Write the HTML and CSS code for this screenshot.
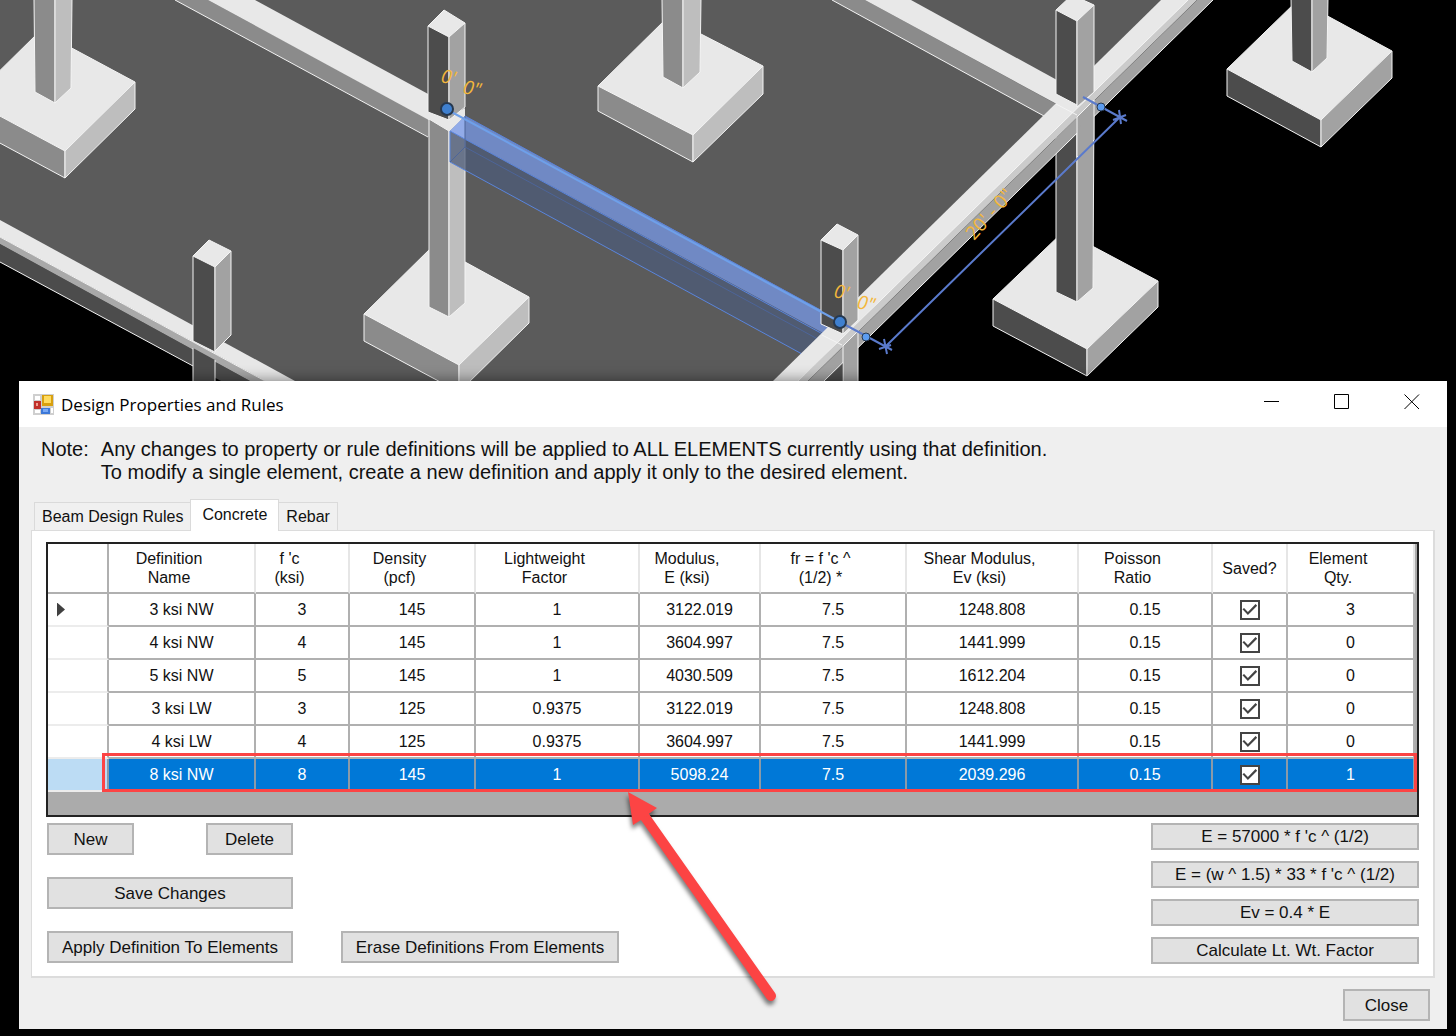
FILE: index.html
```
<!DOCTYPE html>
<html lang="en">
<head>
    <meta charset="UTF-8">
    <meta name="viewport" content="width=device-width, initial-scale=1.0">
    <title>Design Properties and Rules</title>
    <link rel="stylesheet" href="styles.css">
</head>
<body>
    <svg class="scene" viewBox="0 0 1456 381" role="img" aria-label="3D model view">
        <!-- slab -->
        <polygon class="slab" points="0,0 1188,0 798,381 280,381 0,230"/>

        <!-- footings and lower columns -->
        <g class="edges">
            <polygon class="top" points="-30,100 40,31 135,82 65,151"/>
            <polygon class="mid" points="-30,100 65,151 65,178 -30,127"/>
            <polygon class="light" points="65,151 135,82 135,109 65,178"/>
            <polygon class="mid" points="34,-2 55,-2 55,103 35,92"/>
            <polygon class="light" points="55,-2 72,-2 71,88 55,103"/>

            <polygon class="top" points="598,86 668,17 763,66 693,135"/>
            <polygon class="mid" points="598,86 693,135 693,162 598,111"/>
            <polygon class="light" points="693,135 763,66 763,94 693,162"/>
            <polygon class="mid" points="662,-2 683,-2 683,88 663,77"/>
            <polygon class="light" points="683,-2 701,-2 700,72 683,88"/>

            <polygon class="top" points="364,314 434,245 529,297 459,365"/>
            <polygon class="mid" points="364,314 459,365 459,392 364,341"/>
            <polygon class="light" points="459,365 529,297 529,323 459,392"/>
        </g>

        <!-- beam into the second column line -->
        <polygon class="mid" points="175,0 208,0 449,130 449,148"/>
        <polygon class="top" points="208,0 255,0 465,114 465,117 449,131"/>
        <path class="line" d="M175 0 428 137"/>

        <g class="edges">
            <polygon class="mid" points="429,119 449,131 449,317 429,307"/>
            <polygon class="light" points="449,131 465,117 465,303 449,317"/>
        </g>
        <polygon class="top" points="429,112 447,118 465,108 465,117 449,131 429,119"/>
        <g class="edges">
            <polygon class="top" points="428,26 444,10 465,23 449,37"/>
            <polygon class="dark" points="428,26 449,37 449,120 428,112"/>
            <polygon class="grey" points="449,37 465,23 465,107 449,120"/>
        </g>

        <!-- front left beam -->
        <polygon class="top" points="0,220 295,381 265,381 0,237"/>
        <polygon class="dark" points="0,244 250,381 221,381 0,262"/>
        <polygon class="strip" points="0,237 265,381 250,381 0,244"/>
        <path class="line" d="M0 237 265 381M0 262 193 366"/>
        <polygon fill="#000" points="0,264 193,367 193,381 0,381"/>
        <polygon class="dark" points="193,348 215,360 215,381 193,381"/>
        <path class="line" d="M193 348V381M215 360V381"/>
        <g class="edges">
            <polygon class="top" points="193,256 209,240 231,251 215,267"/>
            <polygon class="dark" points="193,256 215,267 215,352 193,341"/>
            <polygon class="grey" points="215,267 231,251 231,335 215,351"/>
        </g>

        <!-- back right beam -->
        <polygon class="mid" points="832,0 865,0 1056,104 1044,116"/>
        <polygon class="top" points="865,0 911,0 1077,91 1077,115"/>
        <path class="line" d="M832 0 1044 116"/>

        <!-- right hand footings -->
        <g class="edges">
            <polygon class="top" points="993,299 1064,231 1158,281 1087,349"/>
            <polygon class="dark" points="993,299 1087,349 1087,376 993,326"/>
            <polygon class="grey" points="1087,349 1158,281 1158,307 1087,376"/>
            <polygon class="dark" points="1056,120 1077,110 1077,302 1056,292"/>
            <polygon class="grey" points="1077,110 1094,96 1093,288 1077,302"/>

            <polygon class="top" points="1227,69 1298,0 1392,51 1321,120"/>
            <polygon class="dark" points="1227,69 1321,120 1321,147 1227,96"/>
            <polygon class="grey" points="1321,120 1392,51 1392,78 1321,147"/>
            <polygon class="dark" points="1291,-2 1312,-2 1312,72 1292,61"/>
            <polygon class="grey" points="1312,-2 1328,-2 1327,58 1312,72"/>
        </g>

        <!-- selected beam -->
        <polygon class="sel-side" points="450,131 835,339 802,354 450,162"/>
        <polygon class="sel-top" points="450,131 465,116 836,318 836,340"/>
        <polygon class="sel-end" points="450,131 465,116 465,139"/>
        <path class="sel-line" d="M450 131V162L802 354M450 131 830 338M465 116 822 311"/>
        <path class="sel-faint" d="M450 162 465 147V116M465 147 825 343"/>

        <!-- edge beam -->
        <polygon class="dark" points="842,363 842,381 822,381"/>
        <polygon class="top" points="1161,0 1190,0 798,381 773,381"/>
        <polygon class="ridge" points="1188,0 1197,0 808,381 798,381"/>
        <polygon class="grey" points="1197,0 1213,0 824,381 808,381"/>
        <path class="line" d="M1188 0 798 381M1213 0 824 381"/>
        <path class="line" d="M1056 104 1077 115M822 335 842 345"/>

        <g class="edges">
            <polygon class="top" points="1056,10 1072,-5 1094,5 1077,21"/>
            <polygon class="dark" points="1056,10 1077,21 1077,105 1056,94"/>
            <polygon class="grey" points="1077,21 1094,5 1094,92 1077,107"/>
            <polygon class="grey" points="1077,117 1094,100 1094,140 1077,157"/>

            <polygon class="top" points="821,240 837,224 858,235 843,250"/>
            <polygon class="dark" points="821,240 843,250 843,334 821,324"/>
            <polygon class="grey" points="843,250 858,235 858,320 843,334"/>
            <polygon class="grey" points="843,346 858,331 858,390 843,390"/>
        </g>
        <polygon class="grey" points="1078,128 1093,115 1093,170 1078,170"/>

        <!-- dimensions -->
        <path class="bright" d="M446 109 840 322"/>
        <path class="dim" d="M840 322 892 350M885 347 1120 117M1083 97 1127 121M884 339 887 354M879 349 891 345M1119 110 1121 124M1113 120 1126 115"/>
        <circle class="grip" cx="447" cy="109" r="6"/>
        <circle class="grip" cx="840" cy="322" r="6"/>
        <circle class="grip small" cx="866" cy="337" r="4"/>
        <circle class="grip small" cx="1101" cy="107" r="4"/>
        <g class="dim-text">
            <text transform="translate(440 82) rotate(12)">0'</text>
            <text transform="translate(462 93) rotate(12)">0"</text>
            <text transform="translate(833 297) rotate(12)">0'</text>
            <text transform="translate(856 308) rotate(12)">0"</text>
            <text class="upright" transform="translate(974 241) rotate(-48)">20' - 0"</text>
        </g>
    </svg>

    <main class="dialog">
        <header class="title-bar">
            <svg class="app-icon" viewBox="0 0 21 21" aria-hidden="true">
                <rect width="21" height="21" fill="#cfcfcf"/>
                <path fill="#fff" d="M2 2h5v4H2zM2 16h5v3H2zM18 14h2v5h-2z"/>
                <rect x="1" y="7" width="7" height="8" fill="#c0302a"/>
                <rect x="3" y="9" width="2" height="3" fill="#f0a090"/>
                <rect x="9" y="1" width="11" height="11" fill="#d8a010"/>
                <rect x="11" y="2" width="7" height="7" fill="#ffdc60"/>
                <rect x="8" y="14" width="9" height="6" fill="#3c78d8"/>
                <rect x="10" y="15" width="5" height="3" fill="#78a8f4"/>
            </svg>
            <h1>Design Properties and Rules</h1>
            <button class="caption-button" aria-label="Minimize">
                <svg viewBox="0 0 16 16"><path d="M0 7.500H15"/></svg>
            </button>
            <button class="caption-button" aria-label="Maximize">
                <svg viewBox="0 0 16 16"><path d="M.5 .5H14.500V14.500H.5z"/></svg>
            </button>
            <button class="caption-button" aria-label="Close window">
                <svg viewBox="0 0 16 16"><path d="M.5 .5 15 15M15 .5 .5 15"/></svg>
            </button>
        </header>

        <div class="dialog-body">
            <div class="note">
                <span>Note:</span>
                <p>Any changes to property or rule definitions will be applied to ALL ELEMENTS currently using that definition.<br>To modify a single element, create a new definition and apply it only to the desired element.</p>
            </div>

            <div class="tabs" role="tablist">
                <button class="tab" role="tab">Beam Design Rules</button>
                <button class="tab active" role="tab" aria-selected="true">Concrete</button>
                <button class="tab" role="tab">Rebar</button>
            </div>

            <section class="panel">
                <div class="grid-view">
                    <table>
                        <colgroup>
                            <col class="c-head"><col class="c-name"><col class="c-fc"><col class="c-density"><col class="c-factor"><col class="c-modulus"><col class="c-fr"><col class="c-shear"><col class="c-poisson"><col class="c-saved"><col class="c-qty">
                        </colgroup>
                        <thead>
                            <tr>
                                <th></th>
                                <th>Definition<br>Name</th>
                                <th>f 'c<br>(ksi)</th>
                                <th>Density<br>(pcf)</th>
                                <th>Lightweight<br>Factor</th>
                                <th>Modulus,<br>E (ksi)</th>
                                <th>fr = f 'c ^<br>(1/2) *</th>
                                <th>Shear Modulus,<br>Ev (ksi)</th>
                                <th>Poisson<br>Ratio</th>
                                <th class="centered">Saved?</th>
                                <th>Element<br>Qty.</th>
                            </tr>
                        </thead>
                        <tbody>
                            <tr>
                                <td><span class="row-arrow"></span></td><td>3 ksi NW</td><td>3</td><td>145</td><td>1</td><td>3122.019</td><td>7.5</td><td>1248.808</td><td>0.15</td>
                                <td><input type="checkbox" aria-label="3 ksi NW saved" checked></td><td>3</td>
                            </tr>
                            <tr>
                                <td></td><td>4 ksi NW</td><td>4</td><td>145</td><td>1</td><td>3604.997</td><td>7.5</td><td>1441.999</td><td>0.15</td>
                                <td><input type="checkbox" aria-label="4 ksi NW saved" checked></td><td>0</td>
                            </tr>
                            <tr>
                                <td></td><td>5 ksi NW</td><td>5</td><td>145</td><td>1</td><td>4030.509</td><td>7.5</td><td>1612.204</td><td>0.15</td>
                                <td><input type="checkbox" aria-label="5 ksi NW saved" checked></td><td>0</td>
                            </tr>
                            <tr>
                                <td></td><td>3 ksi LW</td><td>3</td><td>125</td><td>0.9375</td><td>3122.019</td><td>7.5</td><td>1248.808</td><td>0.15</td>
                                <td><input type="checkbox" aria-label="3 ksi LW saved" checked></td><td>0</td>
                            </tr>
                            <tr>
                                <td></td><td>4 ksi LW</td><td>4</td><td>125</td><td>0.9375</td><td>3604.997</td><td>7.5</td><td>1441.999</td><td>0.15</td>
                                <td><input type="checkbox" aria-label="4 ksi LW saved" checked></td><td>0</td>
                            </tr>
                            <tr class="selected">
                                <td></td><td>8 ksi NW</td><td>8</td><td>145</td><td>1</td><td>5098.24</td><td>7.5</td><td>2039.296</td><td>0.15</td>
                                <td><input type="checkbox" aria-label="8 ksi NW saved" checked></td><td>1</td>
                            </tr>
                        </tbody>
                    </table>
                    <div class="highlight"></div>
                    <svg class="arrow" viewBox="0 0 160 220" aria-hidden="true">
                        <path class="shaft" d="M22 25 148 204"/>
                        <polygon points="5,0 34,16 27,21 18,28 10,33"/>
                    </svg>
                </div>

                <div class="actions">
                    <div class="edit-buttons">
                        <button>New</button>
                        <button class="delete">Delete</button>
                        <button class="wide">Save Changes</button>
                        <button class="wide">Apply Definition To Elements</button>
                        <button class="erase">Erase Definitions From Elements</button>
                    </div>
                    <div class="formula-buttons">
                        <button>E = 57000 * f 'c ^ (1/2)</button>
                        <button>E = (w ^ 1.5) * 33 * f 'c ^ (1/2)</button>
                        <button>Ev = 0.4 * E</button>
                        <button>Calculate Lt. Wt. Factor</button>
                    </div>
                </div>
            </section>

            <footer>
                <button class="close">Close</button>
            </footer>
        </div>
    </main>
</body>
</html>
```
FILE: styles.css
```
* {
    margin: 0;
    padding: 0;
    box-sizing: border-box;
}

body {
    background: #000;
    color: #111;
    font-family: "Liberation Sans", Arial, sans-serif;
    font-size: 17px;
    line-height: 19px;
}

button {
    font: inherit;
    color: inherit;
    white-space: nowrap;
    background: #e1e1e1;
    border: 2px solid #b4b4b4;
}

/* model view */
.scene {
    display: block;
    width: 100%;
}

.slab { fill: #5b5b5b; }
.top { fill: #e8e8e8; }
.light { fill: #bebebe; }
.grey { fill: #a2a2a2; }
.mid { fill: #8b8b8b; }
.dark { fill: #4c4c4c; }
.strip { fill: #a9a9a9; }
.ridge { fill: #cbcbcb; }

.edges polygon {
    stroke: #f4f4f4;
    stroke-width: 1;
}

.line {
    fill: none;
    stroke: #f4f4f4;
}

.sel-top {
    fill: #7089c4;
}

.sel-end {
    fill: #92abe8;
}

.sel-side {
    fill: #4c5b78;
    fill-opacity: 0.75;
}

.sel-line {
    fill: none;
    stroke: #5a85dc;
}

.sel-faint {
    fill: none;
    stroke: #4d6599;
}

.bright {
    stroke: #6ea0ea;
    stroke-width: 2;
}

.dim {
    fill: none;
    stroke: #5a7acc;
    stroke-width: 2;
}

.grip {
    fill: #3f80d0;
    stroke: #26384f;
    stroke-width: 2;
}

.grip.small {
    fill: #5c9cf0;
    stroke-width: 1;
}

.dim-text {
    fill: #f3b73c;
    font-family: "Open Sans", sans-serif;
    font-size: 19px;
    font-style: italic;
    font-weight: 500;
}

.dim-text .upright {
    font-style: normal;
}

/* dialog */
.dialog {
    position: relative;
    margin: 0 9px 8px 19px;
    background: #efefef;
    box-shadow: 0 0 14px rgba(0, 0, 0, 0.5);
}

.title-bar {
    display: flex;
    align-items: center;
    height: 46px;
    padding-left: 14px;
    background: #fff;
}

.title-bar h1 {
    flex: 1;
    margin-left: 7px;
    color: #000;
    font-family: "Open Sans", "Noto Sans", sans-serif;
    font-size: 17px;
    font-weight: normal;
}

.app-icon {
    width: 21px;
    height: 21px;
}

.caption-button {
    width: 70px;
    height: 46px;
    background: none;
    border: none;
}

.caption-button svg {
    width: 16px;
    height: 16px;
    fill: none;
    stroke: #000;
}

.dialog-body {
    padding: 11px 12px 8px;
}

.note {
    display: flex;
    gap: 12px;
    padding-left: 10px;
    font-size: 20px;
    line-height: 23px;
}

.tabs {
    display: flex;
    align-items: flex-end;
    margin-top: 15px;
    padding-left: 3px;
    font-size: 16px;
}

.tab {
    height: 28px;
    padding: 0 7px;
    background: #f0f0f0;
    border: 1px solid #dadada;
    border-bottom: none;
}

.tab.active {
    z-index: 1;
    height: 32px;
    margin: 0 -1px -1px;
    padding: 0 11px 3px;
    background: #fff;
}

.panel {
    padding: 11px 14px 12px;
    background: #fff;
    border: 1px solid #dcdcdc;
    border-width: 1px 2px 2px 1px;
}

.grid-view {
    position: relative;
    height: 275px;
    padding-right: 3px;
    background: #ababab;
    border: 2px solid #222;
}

table {
    width: 100%;
    table-layout: fixed;
    border-collapse: separate;
    border-spacing: 0;
    background: #fff;
    font-size: 16px;
}

th,
td {
    border-right: 2px solid #b0b0b0;
    border-bottom: 2px solid #b0b0b0;
    text-align: center;
    vertical-align: middle;
}

th {
    height: 50px;
    padding-right: 25px;
    border-right-color: #e6e6e6;
    font-weight: normal;
    white-space: nowrap;
}

th:first-child {
    border-right-color: #b0b0b0;
}

th.centered {
    padding-right: 0;
}

td {
    height: 33px;
}

td:first-child {
    border-bottom-color: #ececec;
}

/* the columns share the width in these proportions */
.c-head { width: 61px; }
.c-name { width: 147px; }
.c-fc { width: 94px; }
.c-density { width: 126px; }
.c-factor { width: 164px; }
.c-modulus { width: 121px; }
.c-fr { width: 146px; }
.c-shear { width: 172px; }
.c-poisson { width: 134px; }
.c-saved { width: 75px; }
.c-qty { width: 127px; }

.selected td {
    color: #fff;
    background: #0078d7;
    border-right-color: #8a9aa8;
}

.selected td:first-child {
    background: #bcdcf4;
}

.row-arrow {
    display: block;
    width: 8px;
    height: 14px;
    margin-left: 9px;
    background: #404040;
    clip-path: polygon(0 0, 100% 50%, 0 100%);
}

input[type="checkbox"] {
    display: block;
    width: 20px;
    height: 20px;
    margin: 0 auto;
    appearance: none;
    background: #fff;
    border: 2px solid #444;
}

input[type="checkbox"]:checked::after {
    content: "";
    display: block;
    width: 16px;
    height: 16px;
    background: #444;
    clip-path: polygon(6% 48%, 16% 40%, 40% 65%, 88% 16%, 98% 26%, 40% 84%);
}

/* callouts over the table */
.highlight {
    position: absolute;
    right: 0;
    bottom: 23px;
    left: 54px;
    height: 39px;
    border: 3px solid #fc4444;
}

.arrow {
    position: absolute;
    top: 248px;
    left: 42%;
    z-index: 1;
    width: 160px;
    height: 220px;
    overflow: visible;
    fill: #fc4444;
    filter: drop-shadow(-1px 4px 2px rgba(0, 0, 0, 0.5));
}

.arrow .shaft {
    stroke: #fc4444;
    stroke-width: 10;
    stroke-linecap: round;
}

.actions {
    display: flex;
    justify-content: space-between;
    padding: 6px 0 0 1px;
}

.edit-buttons {
    display: grid;
    grid-template-columns: 87px 72px 87px 48px 278px;
    grid-auto-rows: 32px;
    row-gap: 22px;
}

.edit-buttons .delete {
    grid-column: 3;
}

.edit-buttons .wide {
    grid-column: 1 / 4;
}

.edit-buttons .erase {
    grid-column: 5;
}

.formula-buttons {
    display: flex;
    flex-direction: column;
    gap: 11px;
    width: 268px;
}

.formula-buttons button {
    height: 27px;
}

footer {
    display: flex;
    justify-content: flex-end;
    padding: 11px 5px 0;
}

.close {
    width: 87px;
    height: 32px;
}
```
